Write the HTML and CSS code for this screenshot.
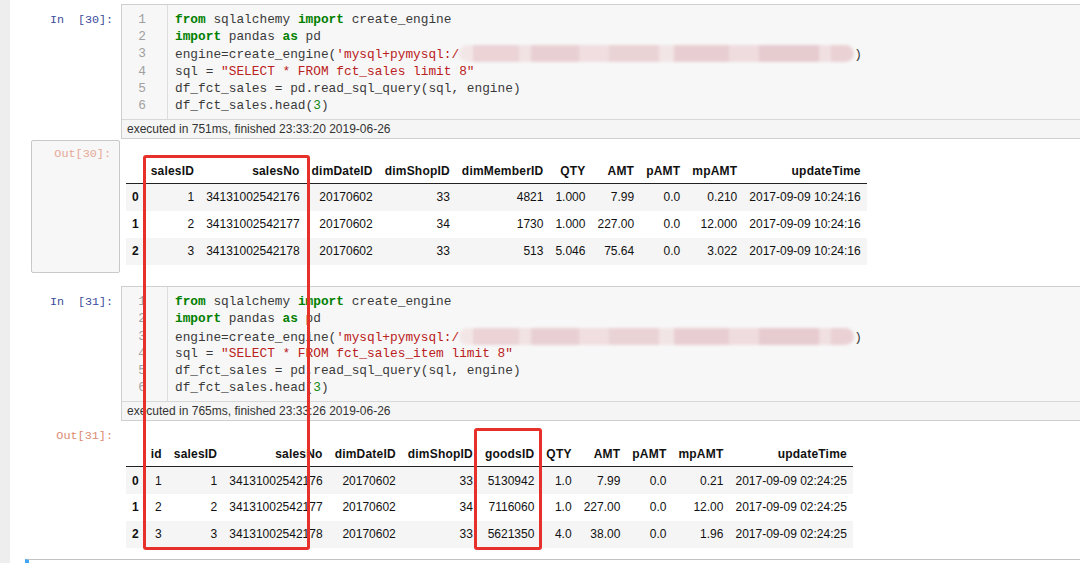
FILE: index.html
```html
<!DOCTYPE html>
<html>
<head>
<meta charset="utf-8">
<link rel="stylesheet" href="styles.css">
</head>
<body>
<div class="page">
  <div class="cell in-cell first">
    <div class="prompt in-prompt">In&nbsp;&nbsp;[30]:</div>
    <div class="input-box">
      <div class="code">
        <div class="gutter"><div>1</div><div>2</div><div>3</div><div>4</div><div>5</div><div>6</div></div>
        <div class="lines">
          <div class="ln"><span class="kw">from</span> sqlalchemy <span class="kw">import</span> create_engine</div>
          <div class="ln"><span class="kw">import</span> pandas <span class="kw">as</span> pd</div>
          <div class="ln">engine=create_engine(<span class="str">'mysql+pymysql:/</span><span class="blur"></span>)</div>
          <div class="ln">sql = <span class="str">"SELECT * FROM fct_sales limit 8"</span></div>
          <div class="ln">df_fct_sales = pd.read_sql_query(sql, engine)</div>
          <div class="ln">df_fct_sales.head(<span class="num">3</span>)</div>
        </div>
      </div>
      <div class="exec">executed in 751ms, finished 23:33:20 2019-06-26</div>
    </div>
  </div>

  <div class="cell out-cell out1">
    <div class="prompt-col"><div class="out-prompt boxed">Out[30]:</div></div>
    <div class="output">
      <table class="df">
        <thead>
          <tr><th></th><th>salesID</th><th>salesNo</th><th>dimDateID</th><th>dimShopID</th><th>dimMemberID</th><th>QTY</th><th>AMT</th><th>pAMT</th><th>mpAMT</th><th>updateTime</th></tr>
        </thead>
        <tbody>
          <tr><th>0</th><td>1</td><td>34131002542176</td><td>20170602</td><td>33</td><td>4821</td><td>1.000</td><td>7.99</td><td>0.0</td><td>0.210</td><td>2017-09-09 10:24:16</td></tr>
          <tr><th>1</th><td>2</td><td>34131002542177</td><td>20170602</td><td>34</td><td>1730</td><td>1.000</td><td>227.00</td><td>0.0</td><td>12.000</td><td>2017-09-09 10:24:16</td></tr>
          <tr><th>2</th><td>3</td><td>34131002542178</td><td>20170602</td><td>33</td><td>513</td><td>5.046</td><td>75.64</td><td>0.0</td><td>3.022</td><td>2017-09-09 10:24:16</td></tr>
        </tbody>
      </table>
    </div>
  </div>

  <div class="cell in-cell second">
    <div class="prompt in-prompt">In&nbsp;&nbsp;[31]:</div>
    <div class="input-box">
      <div class="code">
        <div class="gutter"><div>1</div><div>2</div><div>3</div><div>4</div><div>5</div><div>6</div></div>
        <div class="lines">
          <div class="ln"><span class="kw">from</span> sqlalchemy <span class="kw">import</span> create_engine</div>
          <div class="ln"><span class="kw">import</span> pandas <span class="kw">as</span> pd</div>
          <div class="ln">engine=create_engine(<span class="str">'mysql+pymysql:/</span><span class="blur"></span>)</div>
          <div class="ln">sql = <span class="str">"SELECT * FROM fct_sales_item limit 8"</span></div>
          <div class="ln">df_fct_sales = pd.read_sql_query(sql, engine)</div>
          <div class="ln">df_fct_sales.head(<span class="num">3</span>)</div>
        </div>
      </div>
      <div class="exec">executed in 765ms, finished 23:33:26 2019-06-26</div>
    </div>
  </div>

  <div class="cell out-cell out2">
    <div class="prompt-col"><div class="out-prompt">Out[31]:</div></div>
    <div class="output">
      <table class="df">
        <thead>
          <tr><th></th><th>id</th><th>salesID</th><th>salesNo</th><th>dimDateID</th><th>dimShopID</th><th>goodsID</th><th>QTY</th><th>AMT</th><th>pAMT</th><th>mpAMT</th><th>updateTime</th></tr>
        </thead>
        <tbody>
          <tr><th>0</th><td>1</td><td>1</td><td>34131002542176</td><td>20170602</td><td>33</td><td>5130942</td><td>1.0</td><td>7.99</td><td>0.0</td><td>0.21</td><td>2017-09-09 02:24:25</td></tr>
          <tr><th>1</th><td>2</td><td>2</td><td>34131002542177</td><td>20170602</td><td>34</td><td>7116060</td><td>1.0</td><td>227.00</td><td>0.0</td><td>12.00</td><td>2017-09-09 02:24:25</td></tr>
          <tr><th>2</th><td>3</td><td>3</td><td>34131002542178</td><td>20170602</td><td>33</td><td>5621350</td><td>4.0</td><td>38.00</td><td>0.0</td><td>1.96</td><td>2017-09-09 02:24:25</td></tr>
        </tbody>
      </table>
    </div>
  </div>

  <div class="cell next-cell"></div>
</div>
<div class="mark mark-a"></div>
<div class="mark mark-b"></div>
</body>
</html>
```

FILE: styles.css
```css
html, body {
  margin: 0;
  padding: 0;
  overflow: hidden;
}
body {
  background: #eeeeee;
  font-family: "Liberation Sans", Arial, sans-serif;
  width: 1080px;
  height: 563px;
}
.page {
  margin-left: 10px;
  width: 1070px;
  height: 563px;
  background: #ffffff;
  overflow: hidden;
}
.cell {
  display: flex;
}
.first {
  padding-top: 4px;
}
.second {
  margin-top: 13px;
}
.prompt {
  width: 111px;
  flex: none;
  box-sizing: border-box;
  text-align: right;
  padding-right: 8px;
  font-family: "Liberation Mono", "DejaVu Sans Mono", monospace;
  font-size: 11.7px;
  line-height: 17px;
}
.in-prompt {
  color: #3a4a9a;
  padding-top: 8px;
}
.input-box {
  flex: 1;
  margin-right: -20px;
  border: 1px solid #cfcfcf;
  background: #f7f7f7;
}
.code {
  display: flex;
  border-bottom: 1px solid #d8d8d8;
}
.gutter {
  width: 46px;
  box-sizing: border-box;
  border-right: 1px solid #dddddd;
  padding: 6px 21px 5px 0;
  text-align: right;
  color: #a0a0a0;
  font-family: "Liberation Mono", "DejaVu Sans Mono", monospace;
  font-size: 12.8px;
  line-height: 17.2px;
}
.lines {
  padding: 6px 0 5px 7px;
  font-family: "Liberation Mono", "DejaVu Sans Mono", monospace;
  font-size: 12.8px;
  line-height: 17.2px;
  color: #3a3a3a;
}
.ln {
  white-space: pre;
  height: 17.2px;
}
.kw {
  color: #008000;
  font-weight: bold;
}
.str {
  color: #ba2121;
}
.num {
  color: #118811;
}
.blur {
  display: inline-block;
  width: 395px;
  height: 17px;
  vertical-align: -4px;
  border-radius: 9px;
  background:
    linear-gradient(90deg,
      #f3e4e5 0, #f3e4e5 14px,
      #e9cdd1 14px, #e9cdd1 60px,
      #f1dfe0 60px, #f1dfe0 72px,
      #e6c9cd 72px, #e6c9cd 120px,
      #efdadc 120px, #efdadc 150px,
      #e8cdd0 150px, #e8cdd0 200px,
      #f2e2e3 200px, #f2e2e3 215px,
      #e6c8cc 215px, #e6c8cc 270px,
      #eed8da 270px, #eed8da 300px,
      #e4c4c9 300px, #e4c4c9 360px,
      #efdcde 360px, #efdcde 372px,
      #e8cbcf 372px, #e8cbcf 395px);
  filter: blur(1.5px);
  opacity: 0.85;
}
.exec {
  font-size: 12px;
  color: #333333;
  height: 18px;
  line-height: 19px;
  padding-left: 5px;
  background: #f5f5f5;
}
.prompt-col {
  width: 111px;
  flex: none;
  display: flex;
  flex-direction: column;
}
.out-prompt {
  font-family: "Liberation Mono", "DejaVu Sans Mono", monospace;
  font-size: 11.8px;
  line-height: 17px;
  text-align: right;
  color: #dc8a72;
  padding-right: 8px;
}
.out1 .out-prompt.boxed {
  margin-top: 1px;
  margin-left: 21px;
  width: 89px;
  height: 133px;
  box-sizing: border-box;
  border: 1px solid #c9c9c9;
  border-radius: 2px;
  background: #f7f7f7;
  padding-top: 5px;
  color: #e6a896;
}
.out2 .out-prompt {
  padding-top: 7px;
  padding-right: 8px;
}
.output {
  padding-left: 5px;
}
.out1 .output {
  padding-top: 19px;
}
.out2 .output {
  padding-top: 20px;
}
.df {
  border-collapse: collapse;
  border: none;
  font-size: 12px;
  color: #111111;
}
.df th, .df td {
  padding: 0 6px;
  text-align: right;
  vertical-align: middle;
  white-space: nowrap;
}
.df thead th {
  height: 25px;
  border-bottom: 1px solid #222222;
  font-weight: bold;
  letter-spacing: 0.2px;
}
.df tbody tr {
  height: 27px;
}
.df tbody th {
  font-weight: bold;
}
.df tbody tr:nth-child(odd) {
  background: #f5f5f5;
}
.next-cell {
  margin-top: 11px;
  margin-left: 15px;
  height: 10px;
  border-top: 1px solid #c2c2c2;
  border-left: 4px solid #42a5f5;
}
.mark {
  position: absolute;
  border: 3px solid #e8302a;
  border-radius: 3px;
  box-sizing: border-box;
}
.mark-a {
  left: 143px;
  top: 155px;
  width: 167px;
  height: 395px;
}
.mark-b {
  left: 474px;
  top: 428px;
  width: 68px;
  height: 122px;
}
```
